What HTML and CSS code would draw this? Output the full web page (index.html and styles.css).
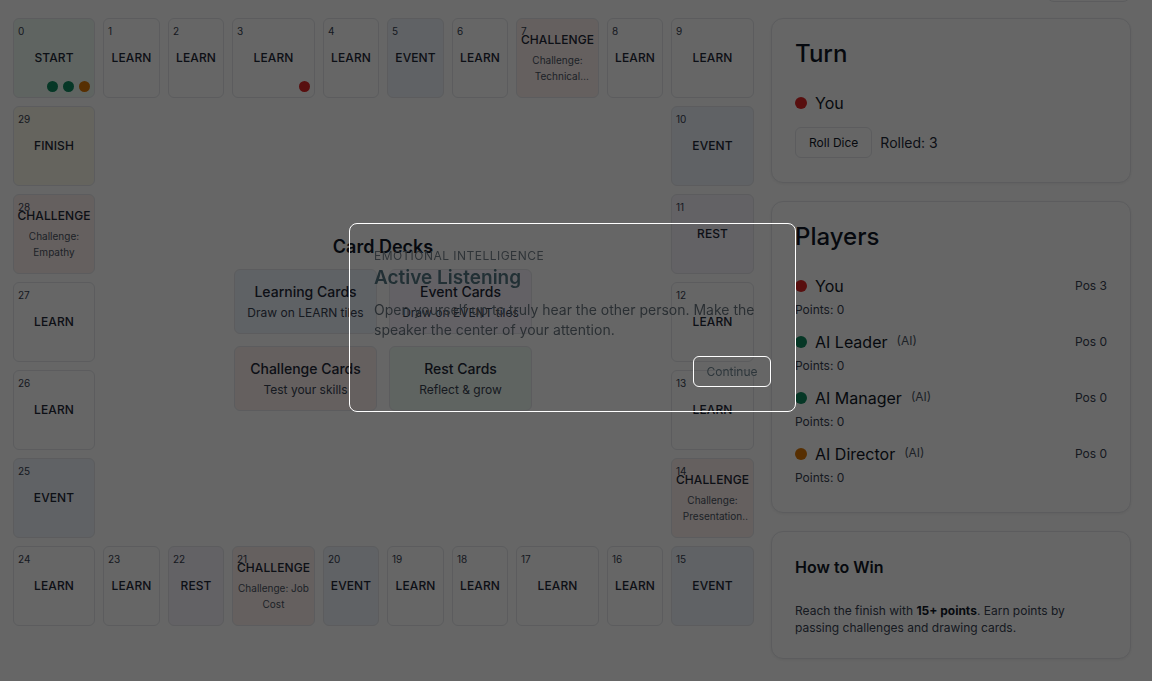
FILE: index.html
```html
<!DOCTYPE html>
<html lang="en">
<head>
<meta charset="utf-8">
<title>Leadership Board Game</title>
<link rel="stylesheet" href="styles.css">
</head>
<body>
<div class="topbar"><div class="topbar-btn"></div></div>
<div class="main">
  <div class="board">
    <div class="tile start r1 c1"><span class="num">0</span><span class="label">START</span>
      <div class="tokens"><span class="dot green"></span><span class="dot green"></span><span class="dot amber"></span></div></div>
    <div class="tile r1 c2"><span class="num">1</span><span class="label">LEARN</span></div>
    <div class="tile r1 c3"><span class="num">2</span><span class="label">LEARN</span></div>
    <div class="tile r1 c4"><span class="num">3</span><span class="label">LEARN</span>
      <div class="tokens"><span class="dot red"></span></div></div>
    <div class="tile r1 c5"><span class="num">4</span><span class="label">LEARN</span></div>
    <div class="tile event r1 c6"><span class="num">5</span><span class="label">EVENT</span></div>
    <div class="tile r1 c7"><span class="num">6</span><span class="label">LEARN</span></div>
    <div class="tile challenge r1 c8"><span class="num">7</span><span class="label">CHALLENGE</span><span class="sub">Challenge: Technical Expertise</span></div>
    <div class="tile r1 c9"><span class="num">8</span><span class="label">LEARN</span></div>
    <div class="tile r1 c10"><span class="num">9</span><span class="label">LEARN</span></div>

    <div class="tile event r2 c10"><span class="num">10</span><span class="label">EVENT</span></div>
    <div class="tile rest r3 c10"><span class="num">11</span><span class="label">REST</span></div>
    <div class="tile r4 c10"><span class="num">12</span><span class="label">LEARN</span></div>
    <div class="tile r5 c10"><span class="num">13</span><span class="label">LEARN</span></div>
    <div class="tile challenge r6 c10"><span class="num">14</span><span class="label">CHALLENGE</span><span class="sub">Challenge: Presentation Skills</span></div>

    <div class="tile event r7 c10"><span class="num">15</span><span class="label">EVENT</span></div>
    <div class="tile r7 c9"><span class="num">16</span><span class="label">LEARN</span></div>
    <div class="tile r7 c8"><span class="num">17</span><span class="label">LEARN</span></div>
    <div class="tile r7 c7"><span class="num">18</span><span class="label">LEARN</span></div>
    <div class="tile r7 c6"><span class="num">19</span><span class="label">LEARN</span></div>
    <div class="tile event r7 c5"><span class="num">20</span><span class="label">EVENT</span></div>
    <div class="tile challenge r7 c4"><span class="num">21</span><span class="label">CHALLENGE</span><span class="sub">Challenge: Job Cost</span></div>
    <div class="tile rest r7 c3"><span class="num">22</span><span class="label">REST</span></div>
    <div class="tile r7 c2"><span class="num">23</span><span class="label">LEARN</span></div>
    <div class="tile r7 c1"><span class="num">24</span><span class="label">LEARN</span></div>

    <div class="tile event r6 c1"><span class="num">25</span><span class="label">EVENT</span></div>
    <div class="tile r5 c1"><span class="num">26</span><span class="label">LEARN</span></div>
    <div class="tile r4 c1"><span class="num">27</span><span class="label">LEARN</span></div>
    <div class="tile challenge r3 c1"><span class="num">28</span><span class="label">CHALLENGE</span><span class="sub">Challenge: Empathy</span></div>
    <div class="tile finish r2 c1"><span class="num">29</span><span class="label">FINISH</span></div>

    <div class="decks">
      <h2 class="decks-title">Card Decks</h2>
      <div class="deck-grid">
        <div class="deck deck-learn"><div class="deck-name">Learning Cards</div><div class="deck-desc">Draw on LEARN tiles</div></div>
        <div class="deck deck-event"><div class="deck-name">Event Cards</div><div class="deck-desc">Draw on EVENT tiles</div></div>
        <div class="deck deck-challenge"><div class="deck-name">Challenge Cards</div><div class="deck-desc">Test your skills</div></div>
        <div class="deck deck-rest"><div class="deck-name">Rest Cards</div><div class="deck-desc">Reflect &amp; grow</div></div>
      </div>
    </div>
  </div>

  <aside class="sidebar">
    <section class="card">
      <h2 class="card-title">Turn</h2>
      <div class="current"><span class="pdot red"></span><span>You</span></div>
      <div class="turn-actions"><button class="btn">Roll Dice</button><span class="rolled">Rolled: 3</span></div>
    </section>
    <section class="card players-card">
      <h2 class="card-title">Players</h2>
      <div class="players">
        <div class="player">
          <div class="player-top"><div class="player-name"><span class="pdot red"></span><span>You</span></div><span class="pos">Pos 3</span></div>
          <div class="points">Points: 0</div>
        </div>
        <div class="player">
          <div class="player-top"><div class="player-name"><span class="pdot green"></span><span>AI Leader</span><span class="ai">(AI)</span></div><span class="pos">Pos 0</span></div>
          <div class="points">Points: 0</div>
        </div>
        <div class="player">
          <div class="player-top"><div class="player-name"><span class="pdot green"></span><span>AI Manager</span><span class="ai">(AI)</span></div><span class="pos">Pos 0</span></div>
          <div class="points">Points: 0</div>
        </div>
        <div class="player">
          <div class="player-top"><div class="player-name"><span class="pdot amber"></span><span>AI Director</span><span class="ai">(AI)</span></div><span class="pos">Pos 0</span></div>
          <div class="points">Points: 0</div>
        </div>
      </div>
    </section>
    <section class="card win-card">
      <h3 class="win-title">How to Win</h3>
      <p class="win-text">Reach the finish with <strong>15+ points</strong>. Earn points by passing challenges and drawing cards.</p>
    </section>
  </aside>
</div>

<div class="overlay"></div>
<div class="modal">
  <div class="modal-kicker">Emotional Intelligence</div>
  <h2 class="modal-title">Active Listening</h2>
  <p class="modal-text">Open yourself up to truly hear the other person. Make the speaker the center of your attention.</p>
  <div class="modal-actions"><button class="modal-btn">Continue</button></div>
</div>
</body>
</html>
```

FILE: styles.css
```css
* { box-sizing: border-box; }
html, body { margin: 0; padding: 0; }
body {
  font-family: Inter, "Noto Sans", "Liberation Sans", sans-serif;
  background: #ffffff;
  color: #111827;
  width: 1152px;
  height: 681px;
  overflow: hidden;
}

.topbar {
  height: 2px;
  display: flex;
  justify-content: flex-end;
  align-items: flex-end;
  padding-right: 21px;
}
.topbar-btn {
  width: 85px;
  height: 34px;
  flex-shrink: 0;
  border: 1px solid #e5e7eb;
  border-radius: 8px;
  background: #fff;
}

.main {
  display: flex;
  gap: 17px;
  padding: 16px 21px 0 13px;
  align-items: flex-start;
}

/* board */
.board {
  width: 741px;
  flex-shrink: 0;
  display: grid;
  grid-template-columns: 82px 57px 56px 83px 56px 57px 56px 83px 56px 83px;
  grid-template-rows: repeat(7, 80px);
  column-gap: 8px;
  row-gap: 8px;
}
.r1 { grid-row: 1; } .r2 { grid-row: 2; } .r3 { grid-row: 3; } .r4 { grid-row: 4; }
.r5 { grid-row: 5; } .r6 { grid-row: 6; } .r7 { grid-row: 7; }
.c1 { grid-column: 1; } .c2 { grid-column: 2; } .c3 { grid-column: 3; } .c4 { grid-column: 4; }
.c5 { grid-column: 5; } .c6 { grid-column: 6; } .c7 { grid-column: 7; } .c8 { grid-column: 8; }
.c9 { grid-column: 9; } .c10 { grid-column: 10; }

.tile {
  position: relative;
  border: 1px solid #e5e7eb;
  border-radius: 6px;
  background: #ffffff;
  display: flex;
  flex-direction: column;
  align-items: center;
  justify-content: center;
  padding: 0 5px;
  text-align: center;
}
.tile.start { background: #eefbf3; }
.tile.finish { background: #fdfbec; }
.tile.event { background: #eff5fd; }
.tile.challenge { background: #fdf0ed; }
.tile.rest { background: #f8f4fd; }

.num {
  position: absolute;
  top: 6px;
  left: 4px;
  font-size: 10px;
  line-height: 12px;
  color: #374151;
}
.label {
  font-size: 12px;
  line-height: 16px;
  font-weight: 500;
  color: #1f2937;
  letter-spacing: 0.1px;
}
.sub {
  margin-top: 4px;
  font-size: 10px;
  line-height: 16px;
  color: #4b5563;
  display: -webkit-box;
  -webkit-line-clamp: 2;
  -webkit-box-orient: vertical;
  overflow: hidden;
}
.tokens {
  position: absolute;
  right: 4px;
  bottom: 5px;
  display: flex;
  gap: 5px;
}
.dot {
  width: 11px;
  height: 11px;
  border-radius: 50%;
}
.red { background: #dc2626; }
.green { background: #0f8a5f; }
.amber { background: #d97706; }

/* decks */
.decks {
  grid-row: 2 / 7;
  grid-column: 2 / 10;
  display: flex;
  flex-direction: column;
  align-items: center;
  justify-content: center;
}
.decks-title {
  margin: 0 0 8px;
  font-size: 18px;
  line-height: 28px;
  font-weight: 600;
  color: #111827;
}
.deck-grid {
  display: grid;
  grid-template-columns: 143px 143px;
  gap: 12px;
}
.deck {
  height: 65px;
  border: 1px solid #e5e7eb;
  border-radius: 6px;
  padding: 12px 6px 0;
  text-align: center;
}
.deck-learn { background: #eef4fd; }
.deck-event { background: #f7f3fd; }
.deck-challenge { background: #fcf0ee; }
.deck-rest { background: #eef9f2; }
.deck-name {
  font-size: 14px;
  line-height: 20px;
  font-weight: 500;
  color: #1f2937;
}
.deck-desc {
  margin-top: 2px;
  font-size: 12px;
  line-height: 18px;
  color: #374151;
}

/* sidebar */
.sidebar {
  width: 360px;
  flex-shrink: 0;
  display: flex;
  flex-direction: column;
  gap: 18px;
}
.card {
  border: 1px solid #e5e7eb;
  border-radius: 12px;
  background: #ffffff;
  box-shadow: 0 1px 3px rgba(0,0,0,0.06);
  padding: 23px 23px 24px;
}
.card-title {
  margin: 0 0 25px;
  font-size: 24px;
  line-height: 24px;
  font-weight: 500;
  color: #111827;
}
.current {
  display: flex;
  align-items: center;
  gap: 8px;
  font-size: 16px;
  line-height: 24px;
  color: #111827;
}
.pdot {
  width: 12px;
  height: 12px;
  border-radius: 50%;
  flex-shrink: 0;
}
.turn-actions {
  margin-top: 12px;
  display: flex;
  align-items: center;
  gap: 8px;
}
.btn {
  font-family: inherit;
  font-size: 12px;
  line-height: 17px;
  padding: 6px 13px;
  border: 1px solid #e5e7eb;
  border-radius: 6px;
  background: #ffffff;
  color: #111827;
}
.rolled {
  font-size: 14px;
  line-height: 20px;
  color: #1f2937;
}
.players-card { padding-bottom: 26px; }
.players {
  display: flex;
  flex-direction: column;
  gap: 12px;
}
.player-top {
  display: flex;
  justify-content: space-between;
  align-items: center;
}
.player-name {
  display: flex;
  align-items: center;
  gap: 8px;
  font-size: 16px;
  line-height: 24px;
  color: #111827;
}
.ai {
  margin-left: 1px;
  font-size: 12px;
  line-height: 16px;
  color: #4b5563;
  position: relative;
  top: -1px;
}
.pos {
  font-size: 12px;
  line-height: 16px;
  color: #374151;
}
.points {
  margin-top: 4px;
  font-size: 12px;
  line-height: 16px;
  color: #374151;
}
.win-card { padding-bottom: 22px; }
.win-title {
  margin: 0 0 23px;
  font-size: 16px;
  line-height: 24px;
  font-weight: 600;
  color: #111827;
}
.win-text {
  margin: 0;
  font-size: 12px;
  line-height: 17px;
  color: #374151;
}
.win-text strong { font-weight: 700; color: #111827; }

/* overlay + modal */
.overlay {
  position: fixed;
  inset: 0;
  background: rgba(0,0,0,0.6);
}
.modal {
  position: fixed;
  left: 349px;
  top: 223px;
  width: 447px;
  height: 189px;
  border: 1px solid #ffffff;
  border-radius: 8px;
  padding: 24px;
  background: transparent;
}
.modal-kicker {
  font-size: 12px;
  line-height: 16px;
  letter-spacing: 0.04em;
  text-transform: uppercase;
  color: #2f3438;
}
.modal-title {
  margin: 2px 0 0;
  font-size: 19px;
  line-height: 24px;
  font-weight: 600;
  color: #223035;
}
.modal-text {
  margin: 10px 0 0;
  font-size: 14px;
  line-height: 20px;
  color: #2a2f33;
}
.modal-actions {
  margin-top: 16px;
  display: flex;
  justify-content: flex-end;
}
.modal-btn {
  font-family: inherit;
  font-size: 12px;
  line-height: 17px;
  padding: 6px 12px;
  width: 78px;
  height: 31px;
  border: 1px solid #ffffff;
  border-radius: 6px;
  background: transparent;
  color: #2d363b;
}
```
